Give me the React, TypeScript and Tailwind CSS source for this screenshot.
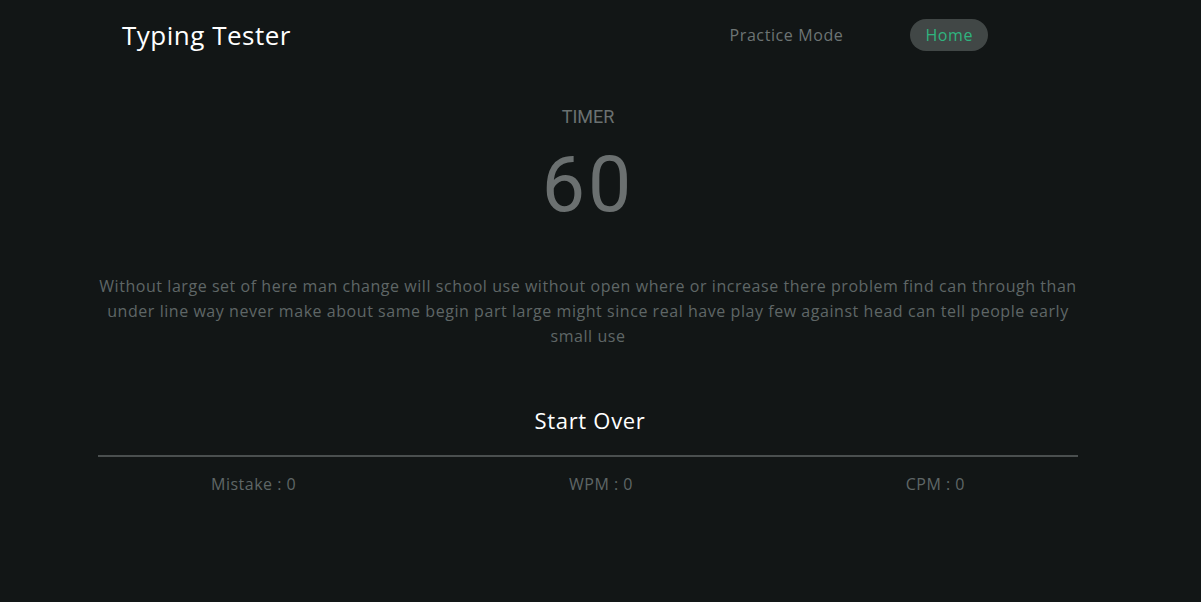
import React from "react";

const words =
  "Without large set of here man change will school use without open where or increase there problem find can through than under line way never make about same begin part large might since real have play few against head can tell people early small use";

export default function App() {
  return (
    <div
      className="min-h-[602px] w-full bg-[#121616] text-[#656c6c]"
      style={{ fontFamily: '"Open Sans", "DejaVu Sans", sans-serif' }}
    >
      <header className="flex h-[70px] items-center pl-[122px] pr-[213px]">
        <h1 className="text-[26px] font-normal leading-none text-white tracking-[0.5px]">
          Typing Tester
        </h1>
        <nav className="ml-auto flex items-center">
          <a className="text-[16px] tracking-[0.6px] text-[#6d7474]">Practice Mode</a>
          <a className="ml-[67px] flex h-[32px] items-center rounded-full bg-[#414746] px-[15px] text-[16px] tracking-[0.6px] text-[#2fb47f]">
            Home
          </a>
        </nav>
      </header>

      <main className="mx-[98px] w-[980px]">
        <div
          className="flex flex-col items-center"
          style={{ fontFamily: 'Roboto, "Liberation Sans", sans-serif' }}
        >
          <div className="mt-[35px] text-[18px] leading-[24px] text-[#6a7171]">TIMER</div>
          <div className="mt-[13px] text-[77px] leading-[86px] tracking-[3px] text-[#6b7070]">60</div>
        </div>

        <p className="mt-[46px] text-center text-[16px] leading-[25px] tracking-[0.55px] text-[#5f6666]">
          {words}
        </p>

        <div className="mt-[56px] flex flex-col items-center pl-[4px]">
          <button className="text-[22px] leading-[30px] tracking-[0.7px] text-white">Start Over</button>
        </div>
        <div className="mt-[20px] h-[2px] w-full bg-[#4a4f4f]" />
        <div className="mt-[17px] flex justify-between px-[113px] text-[16px] leading-[20px] tracking-[0.5px] text-[#5f6666]">
          <span>Mistake : 0</span>
          <span>WPM : 0</span>
          <span>CPM : 0</span>
        </div>
      </main>
    </div>
  );
}
